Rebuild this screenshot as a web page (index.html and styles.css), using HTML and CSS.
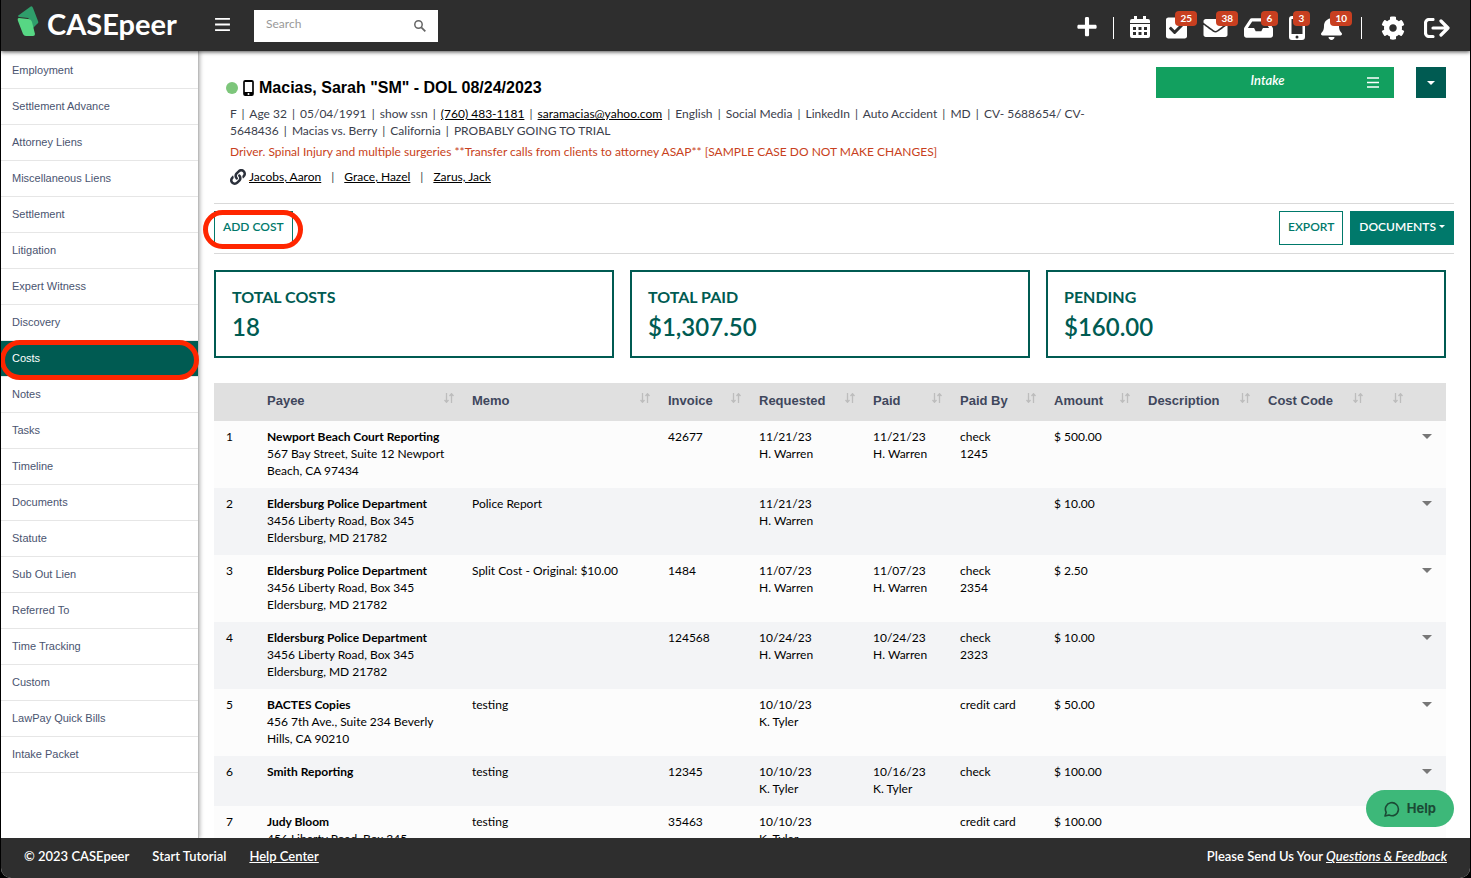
FILE: index.html
```
<!DOCTYPE html>
<html lang="en">
<head>
  <meta charset="UTF-8" />
  <meta name="viewport" content="width=device-width, initial-scale=1.0" />
  <title>CASEpeer - Costs</title>
  <link rel="stylesheet" href="styles.css">
</head>
<body>

  <!-- Shared icons -->
  <svg class="sprite" aria-hidden="true">
    <symbol id="bars" viewBox="0 0 16 14"><path d="M0 1h16M0 7h16M0 13h16" stroke="currentColor" stroke-width="2"/></symbol>
    <symbol id="sort" viewBox="0 0 10 10"><path d="M2.500 0v9M.5 7l2 2.300 2-2.300M7.500 10V1M5.500 3l2-2.300 2 2.300" fill="none" stroke="currentColor" stroke-width="1.300"/></symbol>
    <symbol id="caret" viewBox="0 0 10 5"><path d="M0 0h10L5 5z" fill="currentColor"/></symbol>
    <symbol id="phone" viewBox="0 0 16 24"><path fill="currentColor" fill-rule="evenodd" d="M3 0h10a3 3 0 0 1 3 3v18a3 3 0 0 1-3 3H3a3 3 0 0 1-3-3V3a3 3 0 0 1 3-3zM2.500 3v15h11V3zM8 19.500a1.500 1.500 0 1 0 0 3 1.500 1.500 0 0 0 0-3z"/></symbol>
  </svg>

  <div class="app">
    <header class="topbar">
      <a href="#" class="logo">
        <svg width="22" height="32" viewBox="0 0 22 32" aria-hidden="true">
          <path d="M13 1q2-2 3 1l5 13q1 2-1 3l-4 4-3-8-2-2-9-1q-2-1 0-2z" fill="#2f9e6b"/>
          <path d="M2 12l9 1q3 0 4 3l3 12q0 2-2 2H9q-2 0-3-2L1 15q-1-3 1-3z" fill="#57d784"/>
        </svg>
        <span>CASEpeer</span>
      </a>
      <button class="icon-button menu-button" aria-label="Menu"><svg width="15" height="13"><use href="#bars"/></svg></button>
      <form class="search">
        <input type="text" placeholder="Search" aria-label="Search" />
        <button class="icon-button" type="button" aria-label="Run search">
          <svg width="12" height="12" viewBox="0 0 12 12"><circle cx="4.500" cy="4.500" r="3.700" fill="none" stroke="#666" stroke-width="1.500"/><path d="M7.300 7.300l4 4" stroke="#666" stroke-width="1.800"/></svg>
        </button>
      </form>

      <nav class="actions">
        <button class="icon-button" aria-label="Add"><svg width="20" height="22" viewBox="0 30 448 512"><path fill="currentColor" d="M416 208H272V64c0-17.670-14.330-32-32-32h-32c-17.670 0-32 14.330-32 32v144H32c-17.670 0-32 14.330-32 32v32c0 17.670 14.330 32 32 32h144v144c0 17.670 14.330 32 32 32h32c17.670 0 32-14.330 32-32V304h144c17.670 0 32-14.330 32-32v-32c0-17.670-14.330-32-32-32z"/></svg></button>
        <span class="divider"></span>
        <button class="icon-button" aria-label="Calendar"><svg width="20" height="24" viewBox="0 1 20 24"><path fill="currentColor" fill-rule="evenodd" d="M4 1h3v3h6V1h3v3h2a2 2 0 0 1 2 2v2H0V6a2 2 0 0 1 2-2h2zM0 9h20v12a2 2 0 0 1-2 2H2a2 2 0 0 1-2-2zM3 12v3h3v-3zM8.500 12v3h3v-3zM14 12v3h3v-3zM3 17v3h3v-3zM8.500 17v3h3v-3zM14 17v3h3v-3z"/></svg></button>
        <button class="icon-button" aria-label="Tasks"><svg width="21" height="24" viewBox="0 0 448 512"><path fill="currentColor" d="M400 480H48c-26.510 0-48-21.490-48-48V80c0-26.510 21.490-48 48-48h352c26.510 0 48 21.490 48 48v352c0 26.510-21.490 48-48 48zm-204.686-98.059l184-184c6.248-6.248 6.248-16.379 0-22.627l-22.627-22.627c-6.248-6.248-16.379-6.249-22.628 0L184 302.745l-70.059-70.059c-6.248-6.248-16.379-6.248-22.628 0l-22.627 22.627c-6.248 6.248-6.248 16.379 0 22.627l104 104c6.249 6.250 16.379 6.250 22.628.001z"/></svg><span class="badge">25</span></button>
        <button class="icon-button" aria-label="Messages"><svg width="25" height="24" viewBox="0 0 512 512"><path fill="currentColor" d="M502.300 190.800c3.900-3.100 9.700-.2 9.700 4.700V400c0 26.500-21.500 48-48 48H48c-26.500 0-48-21.500-48-48V195.600c0-5 5.700-7.800 9.700-4.700 22.400 17.400 52.100 39.500 154.100 113.600 21.100 15.400 56.700 47.800 92.200 47.600 35.700.3 72-32.800 92.300-47.600 102-74.100 131.600-96.300 154-113.700zM256 320c23.200.4 56.600-29.200 73.400-41.400 132.700-96.300 142.800-104.700 173.400-128.700 5.800-4.500 9.200-11.500 9.200-18.900v-19c0-26.500-21.500-48-48-48H48c-26.500 0-48 21.500-48 48v19c0 7.400 3.400 14.300 9.200 18.900 30.600 23.900 40.700 32.400 173.400 128.700 16.800 12.200 50.200 41.800 73.400 41.400z"/></svg><span class="badge">38</span></button>
        <button class="icon-button" aria-label="Inbox"><svg width="29" height="24" viewBox="0 0 576 512" preserveAspectRatio="xMidYMid slice"><path fill="currentColor" d="M567.938 243.908L462.250 85.374A48.003 48.003 0 0 0 422.311 64H153.689a48 48 0 0 0-39.938 21.374L8.062 243.908A47.994 47.994 0 0 0 0 270.533V400c0 26.510 21.490 48 48 48h480c26.510 0 48-21.490 48-48V270.533a47.994 47.994 0 0 0-8.062-26.625zM162.252 128h251.497l85.333 128H376l-32 64H232l-32-64H76.918l85.334-128z"/></svg><span class="badge badge-single">6</span></button>
        <button class="icon-button" aria-label="Texts"><svg width="16" height="24"><use href="#phone"/></svg><span class="badge badge-single">3</span></button>
        <button class="icon-button" aria-label="Notifications"><svg width="21" height="24" viewBox="0 0 448 512"><path fill="currentColor" d="M224 512c35.320 0 63.970-28.650 63.970-64H160.030c0 35.350 28.650 64 63.970 64zm215.390-149.710c-19.320-20.760-55.470-51.990-55.470-154.290 0-77.700-54.480-139.900-127.940-155.160V32c0-17.670-14.320-32-31.980-32s-31.980 14.330-31.980 32v20.840C118.560 68.100 64.080 130.300 64.080 208c0 102.300-36.150 133.530-55.470 154.290-6 6.450-8.660 14.160-8.610 21.710.11 16.400 12.980 32 32.100 32h383.800c19.120 0 32-15.600 32.100-32 .05-7.550-2.610-15.270-8.610-21.710z"/></svg><span class="badge">10</span></button>
      </nav>
      <nav class="actions account">
        <span class="divider"></span>
        <button class="icon-button" aria-label="Settings"><svg width="24" height="24" viewBox="0 0 512 512"><path fill="currentColor" d="M487.400 315.700l-42.600-24.600c4.300-23.200 4.300-47 0-70.200l42.600-24.600c4.900-2.800 7.100-8.600 5.500-14-11.100-35.600-30-67.800-54.700-94.600-3.800-4.100-10-5.100-14.800-2.300L380.800 110c-17.900-15.400-38.500-27.300-60.800-35.100V25.800c0-5.600-3.900-10.500-9.400-11.700-36.700-8.200-74.300-7.800-109.200 0-5.500 1.200-9.400 6.100-9.400 11.700V75c-22.200 7.900-42.800 19.800-60.800 35.100L88.700 85.500c-4.900-2.800-11-1.900-14.800 2.300-24.700 26.700-43.600 58.900-54.700 94.600-1.700 5.400.6 11.200 5.500 14L67.300 221c-4.300 23.200-4.300 47 0 70.200l-42.600 24.600c-4.900 2.800-7.100 8.600-5.500 14 11.100 35.600 30 67.800 54.700 94.600 3.800 4.100 10 5.100 14.800 2.300l42.600-24.600c17.900 15.400 38.500 27.300 60.800 35.100v49.200c0 5.600 3.900 10.500 9.400 11.700 36.700 8.200 74.300 7.800 109.200 0 5.500-1.200 9.400-6.100 9.400-11.700v-49.200c22.200-7.900 42.800-19.800 60.800-35.100l42.600 24.600c4.900 2.800 11 1.900 14.800-2.300 24.700-26.700 43.600-58.900 54.700-94.600 1.500-5.500-.7-11.300-5.600-14.100zM256 336c-44.100 0-80-35.900-80-80s35.900-80 80-80 80 35.900 80 80-35.900 80-80 80z"/></svg></button>
        <button class="icon-button" aria-label="Sign out"><svg width="26" height="20" viewBox="0 0 26 20"><path d="M9 1.500H5A3.500 3.500 0 0 0 1.500 5v10A3.500 3.500 0 0 0 5 18.500h4M9 10h14M17 3l7 7-7 7" fill="none" stroke="currentColor" stroke-width="3.200" stroke-linecap="round" stroke-linejoin="round"/></svg></button>
      </nav>
    </header>

    <div class="page">
      <aside class="sidebar">
        <a href="#">Employment</a>
        <a href="#">Settlement Advance</a>
        <a href="#">Attorney Liens</a>
        <a href="#">Miscellaneous Liens</a>
        <a href="#">Settlement</a>
        <a href="#">Litigation</a>
        <a href="#">Expert Witness</a>
        <a href="#">Discovery</a>
        <a href="#" class="active highlight">Costs</a>
        <a href="#">Notes</a>
        <a href="#">Tasks</a>
        <a href="#">Timeline</a>
        <a href="#">Documents</a>
        <a href="#">Statute</a>
        <a href="#">Sub Out Lien</a>
        <a href="#">Referred To</a>
        <a href="#">Time Tracking</a>
        <a href="#">Custom</a>
        <a href="#">LawPay Quick Bills</a>
        <a href="#">Intake Packet</a>
      </aside>

      <main class="content">
        <section class="case-header">
          <div class="case-info">
            <h1><span class="status-dot"></span><svg width="11" height="16"><use href="#phone"/></svg>Macias, Sarah "SM" - DOL 08/24/2023</h1>
            <p class="meta">F <i>|</i> Age 32 <i>|</i> 05/04/1991 <i>|</i> show ssn <i>|</i> <a href="#">(760) 483-1181</a> <i>|</i> <a href="#">saramacias@yahoo.com</a> <i>|</i> English <i>|</i> Social Media <i>|</i> LinkedIn <i>|</i> Auto Accident <i>|</i> MD <i>|</i> CV- 5688654/ CV- 5648436 <i>|</i> Macias vs. Berry <i>|</i> California <i>|</i> PROBABLY GOING TO TRIAL</p>
            <p class="alert">Driver. Spinal Injury and multiple surgeries **Transfer calls from clients to attorney ASAP** [SAMPLE CASE DO NOT MAKE CHANGES]</p>
            <p class="related">
              <svg width="16" height="16" viewBox="0 0 512 512" aria-hidden="true"><path fill="#2b303b" d="M326.612 185.391c59.747 59.809 58.927 155.698.36 214.590-.11.12-.24.25-.36.37l-67.200 67.200c-59.270 59.270-155.699 59.262-214.960 0-59.270-59.260-59.270-155.700 0-214.960l37.106-37.106c9.840-9.840 26.786-3.300 27.294 10.606.648 17.722 3.826 35.527 9.690 52.721 1.986 5.822.567 12.262-3.783 16.612l-13.087 13.087c-28.026 28.026-28.905 73.660-1.155 101.960 28.024 28.579 74.086 28.749 102.325.51l67.200-67.190c28.191-28.191 28.073-73.757 0-101.830-3.701-3.694-7.429-6.564-10.341-8.569a16.037 16.037 0 0 1-6.947-12.606c-.396-10.567 3.348-21.456 11.698-29.806l21.054-21.055c5.521-5.521 14.182-6.199 20.584-1.731a152.482 152.482 0 0 1 20.522 17.197zM467.547 44.449c-59.261-59.262-155.690-59.270-214.960 0l-67.200 67.200c-.12.12-.25.25-.36.37-58.566 58.892-59.387 154.781.36 214.590a152.454 152.454 0 0 0 20.521 17.196c6.402 4.468 15.064 3.789 20.584-1.731l21.054-21.055c8.350-8.350 12.094-19.239 11.698-29.806a16.037 16.037 0 0 0-6.947-12.606c-2.912-2.005-6.640-4.875-10.341-8.569-28.073-28.073-28.191-73.639 0-101.830l67.200-67.190c28.239-28.239 74.300-28.069 102.325.51 27.750 28.300 26.872 73.934-1.155 101.960l-13.087 13.087c-4.350 4.350-5.769 10.790-3.783 16.612 5.864 17.194 9.042 34.999 9.690 52.721.509 13.906 17.454 20.446 27.294 10.606l37.106-37.106c59.271-59.259 59.271-155.699.001-214.959z"/></svg>
              <a href="#">Jacobs, Aaron</a><i>|</i><a href="#">Grace, Hazel</a><i>|</i><a href="#">Zarus, Jack</a>
            </p>
          </div>
          <div class="case-status">
            <button class="stage"><span>Intake</span><svg width="12" height="11"><use href="#bars"/></svg></button>
            <button class="stage-toggle" aria-label="Case options"><svg width="8" height="4"><use href="#caret"/></svg></button>
          </div>
        </section>

        <div class="toolbar">
          <div class="highlight add-cost"><button class="btn">ADD COST</button></div>
          <button class="btn export">EXPORT</button>
          <button class="btn btn-solid">DOCUMENTS <svg width="6" height="3"><use href="#caret"/></svg></button>
        </div>

        <section class="totals">
          <div class="card"><h2>TOTAL COSTS</h2><p>18</p></div>
          <div class="card"><h2>TOTAL PAID</h2><p>$1,307.50</p></div>
          <div class="card"><h2>PENDING</h2><p>$160.00</p></div>
        </section>

        <table class="costs">
          <colgroup>
            <col class="c-num"><col class="c-payee"><col class="c-memo"><col class="c-invoice"><col class="c-requested"><col class="c-paid"><col class="c-by"><col class="c-amount"><col class="c-desc"><col class="c-code"><col class="c-extra"><col class="c-menu">
          </colgroup>
          <thead>
            <tr>
              <th></th>
              <th>Payee<svg><use href="#sort"/></svg></th>
              <th>Memo<svg><use href="#sort"/></svg></th>
              <th>Invoice<svg><use href="#sort"/></svg></th>
              <th>Requested<svg><use href="#sort"/></svg></th>
              <th>Paid<svg><use href="#sort"/></svg></th>
              <th>Paid By<svg><use href="#sort"/></svg></th>
              <th>Amount<svg><use href="#sort"/></svg></th>
              <th>Description<svg><use href="#sort"/></svg></th>
              <th>Cost Code<svg><use href="#sort"/></svg></th>
              <th>&nbsp;<svg><use href="#sort"/></svg></th>
              <th></th>
            </tr>
          </thead>
          <tbody>
            <tr>
              <td>1</td>
              <td><b>Newport Beach Court Reporting</b><br>567 Bay Street, Suite 12 Newport<br>Beach, CA 97434</td>
              <td></td><td>42677</td>
              <td>11/21/23<br>H. Warren</td><td>11/21/23<br>H. Warren</td>
              <td>check<br>1245</td><td>$ 500.00</td><td></td><td></td><td></td>
              <td><button class="row-menu" aria-label="Row 1 menu"><svg width="10" height="5"><use href="#caret"/></svg></button></td>
            </tr>
            <tr>
              <td>2</td>
              <td><b>Eldersburg Police Department</b><br>3456 Liberty Road, Box 345<br>Eldersburg, MD 21782</td>
              <td>Police Report</td><td></td>
              <td>11/21/23<br>H. Warren</td><td></td>
              <td></td><td>$ 10.00</td><td></td><td></td><td></td>
              <td><button class="row-menu" aria-label="Row 2 menu"><svg width="10" height="5"><use href="#caret"/></svg></button></td>
            </tr>
            <tr>
              <td>3</td>
              <td><b>Eldersburg Police Department</b><br>3456 Liberty Road, Box 345<br>Eldersburg, MD 21782</td>
              <td>Split Cost - Original: $10.00</td><td>1484</td>
              <td>11/07/23<br>H. Warren</td><td>11/07/23<br>H. Warren</td>
              <td>check<br>2354</td><td>$ 2.50</td><td></td><td></td><td></td>
              <td><button class="row-menu" aria-label="Row 3 menu"><svg width="10" height="5"><use href="#caret"/></svg></button></td>
            </tr>
            <tr>
              <td>4</td>
              <td><b>Eldersburg Police Department</b><br>3456 Liberty Road, Box 345<br>Eldersburg, MD 21782</td>
              <td></td><td>124568</td>
              <td>10/24/23<br>H. Warren</td><td>10/24/23<br>H. Warren</td>
              <td>check<br>2323</td><td>$ 10.00</td><td></td><td></td><td></td>
              <td><button class="row-menu" aria-label="Row 4 menu"><svg width="10" height="5"><use href="#caret"/></svg></button></td>
            </tr>
            <tr>
              <td>5</td>
              <td><b>BACTES Copies</b><br>456 7th Ave., Suite 234 Beverly<br>Hills, CA 90210</td>
              <td>testing</td><td></td>
              <td>10/10/23<br>K. Tyler</td><td></td>
              <td>credit card</td><td>$ 50.00</td><td></td><td></td><td></td>
              <td><button class="row-menu" aria-label="Row 5 menu"><svg width="10" height="5"><use href="#caret"/></svg></button></td>
            </tr>
            <tr>
              <td>6</td>
              <td><b>Smith Reporting</b></td>
              <td>testing</td><td>12345</td>
              <td>10/10/23<br>K. Tyler</td><td>10/16/23<br>K. Tyler</td>
              <td>check</td><td>$ 100.00</td><td></td><td></td><td></td>
              <td><button class="row-menu" aria-label="Row 6 menu"><svg width="10" height="5"><use href="#caret"/></svg></button></td>
            </tr>
            <tr>
              <td>7</td>
              <td><b>Judy Bloom</b><br>456 Liberty Road, Box 345</td>
              <td>testing</td><td>35463</td>
              <td>10/10/23<br>K. Tyler</td><td></td>
              <td>credit card</td><td>$ 100.00</td><td></td><td></td><td></td>
              <td></td>
            </tr>
          </tbody>
        </table>
      </main>
    </div>

    <footer class="footer">
      <span>© 2023 CASEpeer</span>
      <a href="#" class="plain">Start Tutorial</a>
      <a href="#">Help Center</a>
      <span class="feedback">Please Send Us Your <a href="#"><em>Questions &amp; Feedback</em></a></span>
    </footer>
  </div>

  <button class="help">
    <svg width="16" height="16" viewBox="0 0 16 16" aria-hidden="true"><path d="M1 15l1.200-3.700A6.500 6.500 0 1 1 5 14z" fill="none" stroke="currentColor" stroke-width="1.600" stroke-linejoin="round"/></svg>
    Help
  </button>

</body>
</html>
```
FILE: styles.css
```
* { margin: 0; padding: 0; box-sizing: border-box; }

body {
  height: 100vh;
  overflow: hidden;
  background: #000;
  color: #000;
  font: 12px/17px Lato, sans-serif;
}

button, input { font: inherit; border: 0; background: none; }
button { cursor: pointer; }
svg { display: block; flex-shrink: 0; }
a { color: #000; }
i { font-style: normal; }

.sprite { position: absolute; width: 0; height: 0; }

.app {
  display: flex;
  flex-direction: column;
  height: 100vh;
  margin: 0 1px;
  background: #fff;
  border-radius: 0 0 10px 10px;
  overflow: hidden;
}

/* Top bar */
.topbar {
  display: flex;
  align-items: center;
  flex-shrink: 0;
  height: 51px;
  padding: 0 20px 0 16px;
  background: #2e2e2e;
  color: #fff;
  box-shadow: 0 1px 4px rgba(0,0,0,0.7);
  z-index: 2;
}

.logo {
  display: flex;
  gap: 8px;
  width: 198px;
  padding-bottom: 3px;
  color: #fff;
  font-size: 29px;
  font-weight: 700;
  line-height: 36px;
  text-decoration: none;
}

.icon-button {
  position: relative;
  display: flex;
  color: inherit;
}
.menu-button { padding-bottom: 2px; }

.search {
  display: flex;
  align-items: center;
  width: 184px;
  height: 32px;
  margin-left: 24px;
  padding: 0 12px;
  background: #fff;
}
.search input { flex: 1; min-width: 0; height: 28px; padding-bottom: 4px; outline: 0; }
.search input::placeholder { color: #999; }

.actions {
  display: flex;
  align-items: center;
  gap: 16px;
  margin-left: auto;
  padding-top: 4px;
}
.account { gap: 19px; margin-left: 19px; }
.divider { width: 1px; height: 22px; background: #fff; }

.badge {
  position: absolute;
  top: -5px;
  right: -10px;
  min-width: 17px;
  padding: 0 5px;
  border-radius: 4px;
  background: #c83f20;
  color: #fff;
  font-size: 10px;
  font-weight: 700;
  line-height: 15px;
}
.badge-single { right: -5px; }

/* Sidebar */
.page { display: flex; flex: 1; min-height: 0; }

.sidebar {
  flex: 0 0 198px;
  padding-top: 2px;
  border-right: 1px solid #bbb;
  box-shadow: 1px 0 4px rgba(0,0,0,0.3);
  font-family: "Liberation Sans", Arial, sans-serif;
  font-size: 11px;
}
.sidebar a {
  display: block;
  height: 36px;
  padding: 0 11px;
  border-bottom: 1px solid #e6e6e6;
  color: #4a5470;
  line-height: 35px;
  text-decoration: none;
}
.sidebar .active { background: #005b52; color: #fff; }

.highlight { position: relative; }
.highlight::after {
  content: "";
  position: absolute;
  inset: -1px -1px -4px;
  border: 5px solid #ff2600;
  border-radius: 20px;
  pointer-events: none;
}

/* Case header */
.content {
  flex: 1;
  min-width: 0;
  padding: 16px 16px 0 15px;
  overflow: hidden;
}

.case-header {
  display: flex;
  justify-content: space-between;
  padding-bottom: 18px;
  border-bottom: 1px solid #d9d9d9;
}
.case-info { max-width: 890px; padding: 11px 0 0 16px; }

h1 {
  display: flex;
  align-items: center;
  gap: 5px;
  margin: 0 0 7px -4px;
  font: bold 16px/20px "Liberation Sans", Arial, sans-serif;
}
.status-dot { width: 12px; height: 12px; border-radius: 50%; background: #7dc67b; }

.meta { color: #3b404b; }
.meta i { margin: 0 2px; }
.alert { margin-top: 4px; color: #c83f20; }
.related { display: flex; align-items: center; gap: 3px; margin-top: 8px; }
.related i { margin: 0 7px; color: #3b404b; }

.case-status { display: flex; gap: 22px; padding-right: 8px; }
.stage {
  display: flex;
  align-items: center;
  width: 238px;
  height: 31px;
  padding: 0 15px 0 12px;
  background: #12a05f;
  color: #fff;
  font-size: 13px;
}
.stage span { flex: 1; padding-bottom: 4px; font-style: italic; font-weight: 600; }
.stage-toggle {
  display: flex;
  align-items: center;
  justify-content: center;
  width: 30px;
  height: 31px;
  background: #005b52;
  color: #fff;
}

/* Toolbar */
.toolbar {
  display: flex;
  gap: 7px;
  padding: 7px 0 8px;
  border-bottom: 1px solid #d9d9d9;
}
.btn {
  display: flex;
  align-items: center;
  gap: 3px;
  height: 34px;
  padding: 0 8px 3px;
  border: 1px solid #00796b;
  color: #00796b;
  font-weight: 600;
}
.btn-solid { background: #00796b; color: #fff; }
.export { margin-left: auto; }
.add-cost::after { inset: -1px -10px -4px -11px; }

/* Totals */
.totals {
  display: grid;
  grid-template-columns: repeat(3, 1fr);
  gap: 16px;
  margin: 16px 8px 25px 0;
}
.card {
  padding: 15px 16px 14px;
  border: 2px solid #005b52;
  color: #005b52;
}
.card h2 { font-size: 16px; font-weight: 700; line-height: 20px; }
.card p { margin-top: 5px; font-size: 24px; font-weight: 600; line-height: 30px; }

/* Costs table */
.costs {
  width: calc(100% - 8px);
  table-layout: fixed;
  border-collapse: collapse;
}
.c-num { width: 41px; }
.c-payee { width: 205px; }
.c-memo { width: 196px; }
.c-invoice { width: 91px; }
.c-requested { width: 114px; }
.c-paid { width: 87px; }
.c-by { width: 94px; }
.c-amount { width: 94px; }
.c-desc { width: 120px; }
.c-code { width: 113px; }
.c-extra { width: 40px; }
.c-menu { width: 37px; }

.costs th {
  height: 38px;
  padding: 0 6px 4px 12px;
  background: #e0e0e0;
  color: #3f475c;
  font: bold 13px/17px "Liberation Sans", Arial, sans-serif;
  text-align: left;
  white-space: nowrap;
}
.costs th svg { float: right; width: 10px; height: 10px; margin-top: 1px; color: #bdbdbd; }
.costs td {
  padding: 7px 6px 9px 12px;
  vertical-align: top;
  white-space: nowrap;
}
.costs tbody tr { background: #fcfcfc; }
.costs tbody tr:nth-child(even) { background: #f3f4f6; }
.costs b { font-weight: 700; }
.row-menu { display: block; padding: 6px 0 6px 1px; color: #777; }

/* Footer */
.footer {
  display: flex;
  gap: 23px;
  flex-shrink: 0;
  height: 40px;
  padding: 10px 23px 0;
  background: #2e2e2e;
  color: #fff;
  font-size: 13px;
  font-weight: 600;
}
.footer a { color: #fff; }
.footer .plain { text-decoration: none; }
.feedback { margin-left: auto; }

.help {
  position: fixed;
  right: 17px;
  bottom: 51px;
  display: flex;
  align-items: center;
  gap: 7px;
  height: 37px;
  padding: 0 18px;
  border-radius: 19px;
  background: #3db879;
  color: #1b4a35;
  font: bold 13px/17px Inter, sans-serif;
}
```
